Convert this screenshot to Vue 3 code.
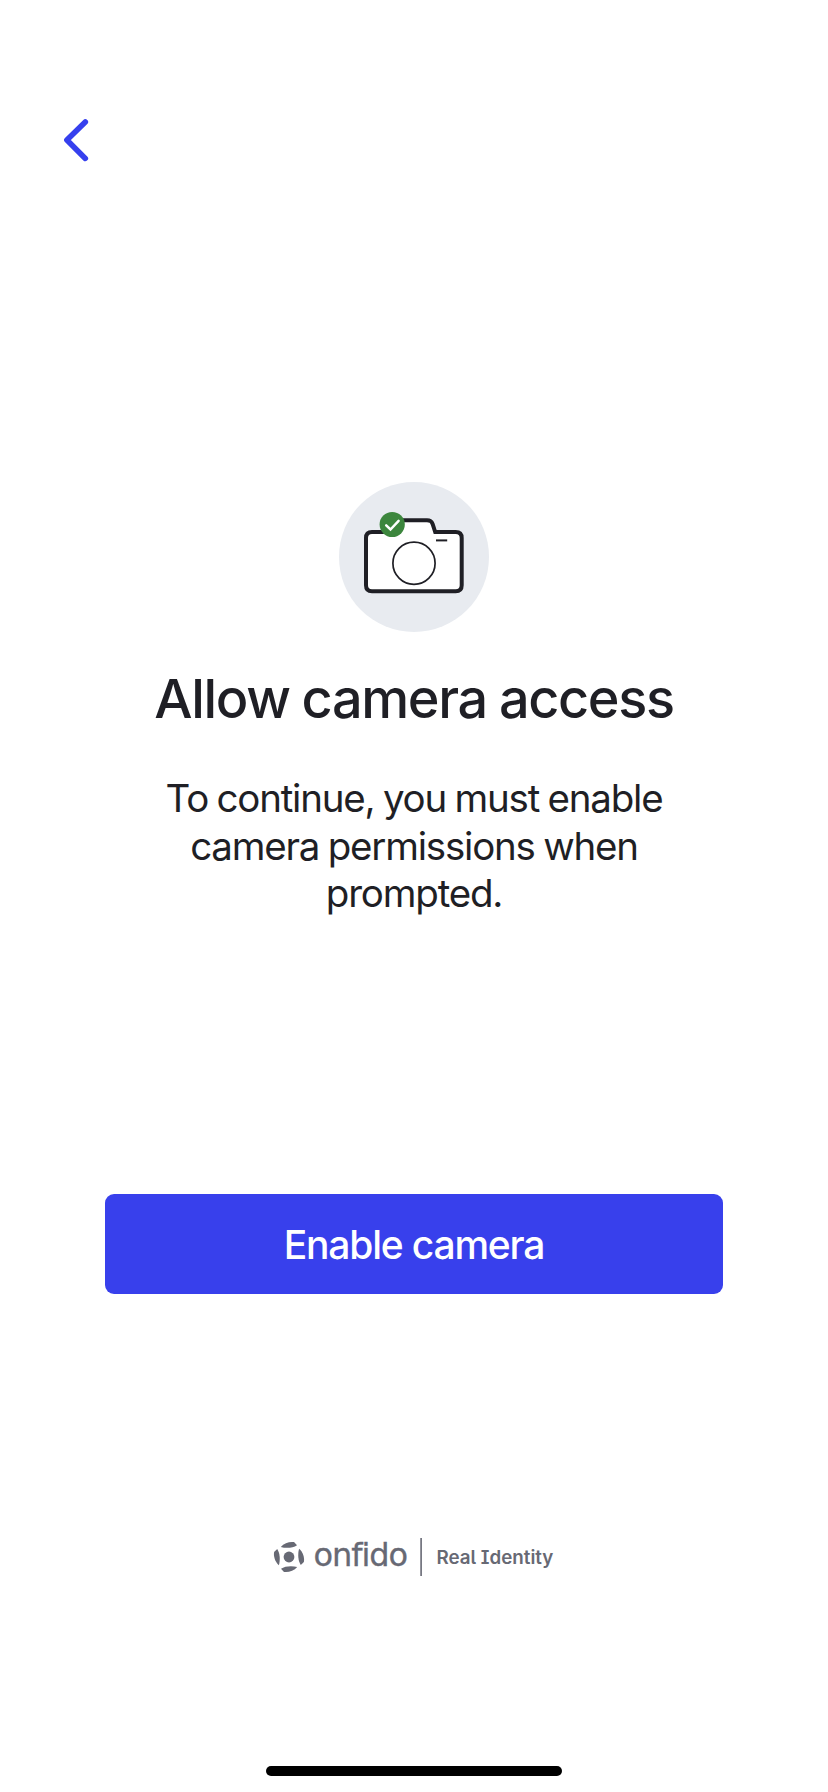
<script setup>
const lines = ['To continue, you must enable', 'camera permissions when', 'prompted.']
const turns = [0, 90, 180, 270]
</script>

<template>
  <main class="screen">
    <header class="nav">
      <button class="back" aria-label="Back">
        <svg width="32" height="48" viewBox="0 0 32 48" fill="none">
          <path d="M25.3 5.900 6.900 24.100l18.400 18.300" stroke="#3640ee" stroke-width="5.600" stroke-linecap="round" stroke-linejoin="round" />
        </svg>
      </button>
    </header>

    <svg class="camera" width="150" height="150" viewBox="0 0 150 150" fill="none">
      <circle cx="75" cy="75" r="75" fill="#e8ebf0" />
      <path d="M33 50h17l7-11.700h31c3.500 0 4.600 1 5.600 3.700L96.200 50h20.500q6 0 6 6v47.300q0 6-6 6H33q-6 0-6-6V56q0-6 6-6Z" fill="#fff" stroke="#1f1f25" stroke-width="4" />
      <circle cx="75" cy="81.200" r="21.100" stroke="#1f1f25" stroke-width="1.700" />
      <path d="M97 58.400h11.200" stroke="#1f1f25" stroke-width="2" />
      <circle cx="53.200" cy="42.500" r="12.600" fill="#3c863d" />
      <path d="m47.200 43.300 4.300 4.200 8.100-8.600" stroke="#fff" stroke-width="2.500" stroke-linecap="round" />
    </svg>

    <h1 class="title">Allow camera access</h1>
    <p class="copy">
      <span v-for="line in lines" :key="line">{{ line }}</span>
    </p>

    <button class="enable"><span>Enable camera</span></button>

    <footer class="brand">
      <svg width="280" height="38" viewBox="0 0 280 38" fill="#676974">
        <circle cx="15" cy="19" r="5.400" />
        <path
          v-for="turn in turns"
          :key="turn"
          :transform="`rotate(${turn} 15 19)`"
          d="M6.800 8.900C10 5 16 3.300 20 4.100L23 7.200C19 10 12 10.400 6.800 8.900Z"
        />
        <text class="wordmark" x="39.600" y="28.300" textLength="94.500" lengthAdjust="spacing">onfido</text>
        <path d="M146.300 0h1.600v38h-1.600z" />
        <text class="tagline" x="162.400" y="26" textLength="117" lengthAdjust="spacingAndGlyphs">Real Identity</text>
      </svg>
    </footer>
    <div class="home"></div>
  </main>
</template>

<style>
body {
  margin: 0;
  background: #fff;
}
</style>

<style scoped>
.screen {
  box-sizing: border-box;
  width: 828px;
  height: 1792px;
  padding: 116px 0 16px;
  display: flex;
  flex-direction: column;
  align-items: center;
  background: #fff;
  color: #1f1f25;
  font-family: Inter, "Liberation Sans", sans-serif;
}
.nav {
  align-self: stretch;
  height: 48px;
  padding-left: 60px;
}
.back {
  display: block;
  padding: 0;
  border: 0;
  background: none;
}
.back svg {
  display: block;
}
.camera {
  flex: none;
  margin-top: 318px;
}
.title {
  margin: 34px 0 0;
  font-size: 54px;
  line-height: 66px;
  font-weight: 500;
  letter-spacing: -1.350px;
  word-spacing: -1px;
  white-space: nowrap;
}
.copy {
  margin: 43px 0 0;
  display: flex;
  flex-direction: column;
  align-items: center;
  font-size: 38.500px;
  line-height: 47.700px;
  letter-spacing: -1.200px;
  word-spacing: -1.200px;
  white-space: nowrap;
}
.enable {
  flex: none;
  margin-top: 276px;
  width: 618px;
  height: 100px;
  padding: 2px 0 0;
  border: 0;
  border-radius: 9px;
  background: #3840ec;
  color: #fff;
  font: 500 39px/48px Inter, "Liberation Sans", sans-serif;
  letter-spacing: -1.200px;
}
.brand {
  margin-top: 244px;
  width: 280px;
  height: 38px;
}
.brand svg {
  display: block;
  overflow: visible;
}
.wordmark {
  font: 400 32px "DejaVu Sans", sans-serif;
  font-variant-ligatures: none;
  stroke: #676974;
  stroke-width: 0.300px;
}
.tagline {
  font: 600 18.500px Inter, sans-serif;
  font-feature-settings: "cv08", "cv05";
}
.home {
  width: 296px;
  height: 10px;
  margin-top: auto;
  border-radius: 5px;
  background: #000;
}
</style>
